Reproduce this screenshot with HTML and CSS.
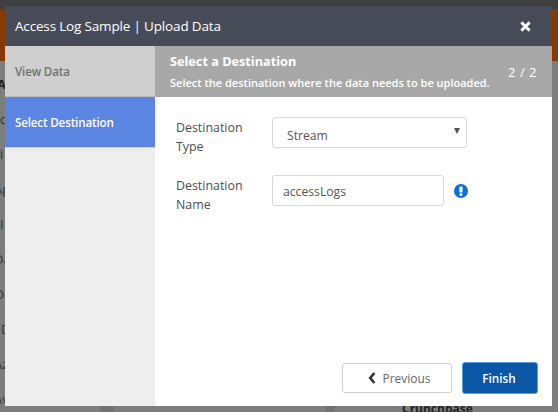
FILE: index.html
```html
<!DOCTYPE html>
<html lang="en">
<head>
<meta charset="utf-8">
<title>Access Log Sample | Upload Data</title>
<link rel="stylesheet" href="styles.css">
</head>
<body>
<div class="page">
  <div class="topbar"></div>
  <div class="banner"></div>
  <div class="behind">
    <span class="b-a">A</span>
    <span>c</span><span>i</span><span class="cut">Ap</span><span>I</span><span class="cut">Da</span><span class="cut">Or</span><span class="pad">D</span><span class="cut">Az</span><span class="cut">Av</span>
  </div>
  <div class="crunch">Crunchbase</div>
  <div class="cardline cardline-a"></div>
  <div class="cardline cardline-b"></div>
</div>
<section class="modal">
  <header class="modal-head">
    <h1 class="modal-title">Access Log Sample | Upload Data</h1>
    <svg class="close" viewBox="0 0 12 12" width="11" height="11" aria-label="Close"><path d="M2.6 0.4 6 3.8 9.4 0.4 11.6 2.6 8.2 6l3.4 3.4-2.2 2.2L6 8.2l-3.4 3.4-2.2-2.2L3.8 6 .4 2.6z" fill="#fff"/></svg>
  </header>
  <div class="modal-body">
    <nav class="steps">
      <div class="step step-done">View Data</div>
      <div class="step step-active">Select Destination</div>
    </nav>
    <div class="content">
      <div class="banner-head">
        <div>
          <div class="bh-title">Select a Destination</div>
          <div class="bh-sub">Select the destination where the data needs to be uploaded.</div>
        </div>
        <div class="bh-count">2 / 2</div>
      </div>
      <form class="form">
        <div class="row row-type">
          <label class="label">Destination Type</label>
          <div class="field field-select">Stream<span class="caret"></span></div>
        </div>
        <div class="row">
          <label class="label">Destination Name</label>
          <div class="field field-input">accessLogs</div>
          <svg class="info" viewBox="0 0 14 14" width="14" height="14"><circle cx="7" cy="7" r="7" fill="#0b6fd6"/><rect x="5.4" y="2.4" width="3.2" height="6" rx="1" fill="#fff"/><circle cx="7" cy="10.4" r="1.5" fill="#fff"/></svg>
        </div>
      </form>
      <div class="actions">
        <button type="button" class="btn btn-prev"><svg viewBox="0 0 8 12" width="8" height="12"><path d="M6.4 1 2.2 6l4.2 5" fill="none" stroke="#333" stroke-width="2.6"/></svg>Previous</button>
        <button type="button" class="btn btn-finish">Finish</button>
      </div>
    </div>
  </div>
</section>
</body>
</html>
```

FILE: styles.css
```css
* { box-sizing: border-box; }
html, body { margin: 0; height: 100%; }
body {
  width: 558px;
  height: 412px;
  overflow: hidden;
  background: #7d7d7d;
  font-family: "Open Sans", "Noto Sans", sans-serif;
  color: #4a4a4a;
  font-size: 12px;
}
.page { width: 558px; height: 412px; overflow: hidden; position: relative; }
.topbar { height: 9px; background: #3f3f3f; }
.banner { height: 52px; background: #863a00; }
.behind {
  position: absolute;
  left: 0;
  top: 76px;
  width: 20px;
  display: flex;
  flex-direction: column;
  align-items: flex-start;
  gap: 18px;
  color: #333;
  font-size: 13px;
  line-height: 17px;
}
.b-a { font-weight: 700; color: #222; margin-left: -3px; }
.cut { margin-left: -6px; }
.pad { margin-left: 1px; }
.crunch {
  position: absolute;
  left: 402px;
  top: 400px;
  font-size: 12px;
  font-weight: 700;
  color: #222;
}
.cardline { position: absolute; top: 406px; width: 6px; height: 6px; background: #727272; }
.cardline-a { left: 100px; width: 14px; }
.cardline-b { left: 325px; width: 10px; }
.modal {
  position: absolute;
  left: 5px;
  top: 6px;
  width: 547px;
  height: 400px;
  display: flex;
  flex-direction: column;
  background: #fff;
}
.modal-head {
  height: 40px;
  flex: none;
  background: #474b57;
  color: #fff;
  display: flex;
  align-items: center;
  justify-content: space-between;
  padding: 0 21px 0 10px;
}
.modal-title { margin: 0; font-size: 13.5px; letter-spacing: -0.17px; font-weight: 400; line-height: 20px; }
.close { display: block; }
.modal-body { flex: 1; display: flex; min-height: 0; }
.steps { width: 150px; flex: none; background: #eeeeee; }
.step {
  height: 51px;
  display: flex;
  align-items: center;
  padding: 0 0 0 10px;
  border-bottom: 1px solid #b9b9b9;
  font-size: 11.6px;
  letter-spacing: -0.15px;
  font-weight: 600;
}
.step-done { background: #cfcfcf; color: #6f6f6f; }
.step-active { background: #5a85e3; color: #fff; border-bottom-color: #c6cfe4; }
.content { flex: 1; display: flex; flex-direction: column; min-width: 0; }
.banner-head {
  height: 51px;
  flex: none;
  background: #a8a8a8;
  color: #fff;
  display: flex;
  align-items: center;
  justify-content: space-between;
  padding: 0 15px;
}
.bh-title { font-size: 12.7px; font-weight: 700; line-height: 20px; }
.bh-sub { font-size: 11px; font-weight: 600; line-height: 20px; margin-top: 2px; }
.bh-count { font-size: 13px; letter-spacing: 0.5px; }
.form { flex: 1; padding: 20px 20px 0 21px; }
.row { display: flex; align-items: flex-start; height: 31px; }
.row-type { margin-bottom: 27px; }
.label { width: 96px; flex: none; font-size: 12.4px; line-height: 19px; padding-top: 1px; color: #4d4d4d; }
.field {
  height: 31px;
  border: 1px solid #d8d8d8;
  border-radius: 3px;
  background: #fff;
  font-size: 12.2px;
  display: flex;
  align-items: center;
  color: #555;
}
.field-select { width: 195px; padding: 6px 0 0 14px; position: relative; }
.caret {
  position: absolute;
  right: 6px;
  top: 10px;
  width: 0;
  height: 0;
  border-left: 3px solid transparent;
  border-right: 3px solid transparent;
  border-top: 6px solid #555;
}
.field-input { width: 172px; padding: 1px 0 0 10px; }
.info { margin: 9px 0 0 10px; flex: none; }
.actions {
  flex: none;
  display: flex;
  justify-content: flex-end;
  align-items: center;
  gap: 10px;
  padding: 0 14px 12px;
}
.btn {
  border-radius: 3px;
  font-family: inherit;
  font-size: 12px;
  display: flex;
  align-items: center;
  justify-content: center;
}
.btn-prev {
  width: 110px;
  height: 30px;
  background: #fff;
  border: 1px solid #cfcfcf;
  color: #666;
  gap: 6px;
  padding: 0 0 0 5px;
}
.btn-finish {
  width: 76px;
  height: 32px;
  background: #0a58a5;
  border: 1px solid #5a9ae6;
  color: #fff;
  font-size: 11.7px;
  font-weight: 600;
  padding: 0 2px 0 0;
}
```
